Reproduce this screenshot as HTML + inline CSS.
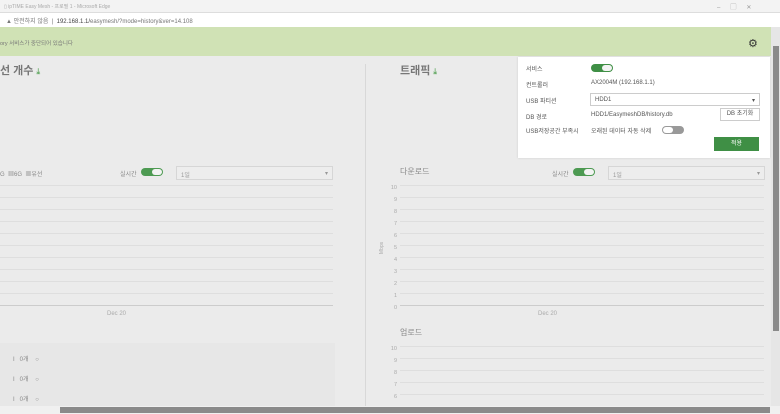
<!DOCTYPE html>
<html><head><meta charset="utf-8"><style>
*{margin:0;padding:0;box-sizing:border-box}
body{width:780px;height:414px;overflow:hidden;background:#ebebeb;font-family:"Liberation Sans","Noto Sans CJK KR",sans-serif;position:relative;color:#888}
.a{position:absolute}
.t{font-size:6px;white-space:nowrap}
.g{position:absolute;height:1px;background:#dedede}
.tog{position:absolute;width:22px;height:8px;border-radius:4px;background:#4d9a52}
.tog:after{content:"";position:absolute;right:1px;top:1px;width:10px;height:6px;border-radius:3px;background:#f3f3f3}
.sel{position:absolute;height:14px;border:1px solid #d6d6d6;background:#ededed;font-size:6px;padding:3px 4px;color:#999}
</style></head><body>
<div class="a" style="left:0;top:0;width:780px;height:12px;background:#f3f3f3"></div>
<div class="a t" style="left:4px;top:3px;color:#aaa;font-size:5px">▯ ipTIME Easy Mesh - 프로필 1 - Microsoft Edge</div>
<div class="a t" style="left:717px;top:2px;color:#999">–&nbsp;&nbsp;&nbsp;&nbsp;&nbsp;&nbsp;▢&nbsp;&nbsp;&nbsp;&nbsp;&nbsp;&nbsp;✕</div>
<div class="a" style="left:0;top:12px;width:780px;height:15px;background:#fff;border-top:1px solid #ddd"></div>
<div class="a t" style="left:6px;top:16px;color:#777">▲ 안전하지 않음 &nbsp;|&nbsp; <span style="color:#444">192.168.1.1/</span>easymesh/?mode=history&amp;ver=14.108</div>
<div class="a" style="left:0;top:27px;width:771px;height:29px;background:#d0e2b5"></div>
<div class="a t" style="left:0;top:39px;color:#777;font-size:5.5px">ory 서비스가 중단되어 있습니다</div>
<div class="a" style="left:748px;top:37px;font-size:11px;color:#333">⚙</div>
<div class="a" style="left:0;top:62px;font-size:11px;color:#777;font-weight:bold">선 개수 <span style="color:#6a6;font-size:8px">⤓</span></div>
<div class="a" style="left:400px;top:62px;font-size:11px;color:#777;font-weight:bold">트래픽 <span style="color:#6a6;font-size:8px">⤓</span></div>
<div class="a" style="left:365px;top:64px;width:1px;height:342px;background:#d8d8d8"></div>
<!-- left chart -->
<div class="a t" style="left:0;top:169px">G &nbsp;▦6G &nbsp;▦유선</div>
<div class="a t" style="left:120px;top:169px">실시간</div>
<div class="tog" style="left:141px;top:168px"></div>
<div class="sel" style="left:176px;top:166px;width:157px">1일<span style="float:right">▾</span></div>
<div class="g" style="left:0;top:185px;width:333px"></div><div class="g" style="left:0;top:197px;width:333px"></div><div class="g" style="left:0;top:209px;width:333px"></div><div class="g" style="left:0;top:221px;width:333px"></div><div class="g" style="left:0;top:233px;width:333px"></div><div class="g" style="left:0;top:245px;width:333px"></div><div class="g" style="left:0;top:257px;width:333px"></div><div class="g" style="left:0;top:269px;width:333px"></div><div class="g" style="left:0;top:281px;width:333px"></div><div class="g" style="left:0;top:293px;width:333px"></div>
<div class="a" style="left:0;top:305px;width:333px;height:1px;background:#ccc"></div>
<div class="a t" style="left:107px;top:311px;color:#aaa">Dec 20</div>
<div class="a" style="left:0;top:343px;width:335px;height:63px;background:#e7e7e7"></div>
<div class="a t" style="left:13px;top:354px">I &nbsp; 0개 &nbsp;&nbsp; ○</div>
<div class="a t" style="left:13px;top:374px">I &nbsp; 0개 &nbsp;&nbsp; ○</div>
<div class="a t" style="left:13px;top:394px">I &nbsp; 0개 &nbsp;&nbsp; ○</div>
<!-- right chart -->
<div class="a" style="left:400px;top:166px;font-size:8px;color:#888">다운로드</div>
<div class="a t" style="left:552px;top:169px">실시간</div>
<div class="tog" style="left:573px;top:168px"></div>
<div class="sel" style="left:608px;top:166px;width:157px">1일<span style="float:right">▾</span></div>
<div class="a t" style="left:390px;top:182px;color:#aaa;line-height:12px;text-align:right;width:7px;font-size:5.5px">10<br>9<br>8<br>7<br>6<br>5<br>4<br>3<br>2<br>1<br>0</div>
<div class="a t" style="left:376px;top:245px;transform:rotate(-90deg);color:#aaa;font-size:5px">Mbps</div>
<div class="g" style="left:400px;top:185px;width:364px"></div><div class="g" style="left:400px;top:197px;width:364px"></div><div class="g" style="left:400px;top:209px;width:364px"></div><div class="g" style="left:400px;top:221px;width:364px"></div><div class="g" style="left:400px;top:233px;width:364px"></div><div class="g" style="left:400px;top:245px;width:364px"></div><div class="g" style="left:400px;top:257px;width:364px"></div><div class="g" style="left:400px;top:269px;width:364px"></div><div class="g" style="left:400px;top:281px;width:364px"></div><div class="g" style="left:400px;top:293px;width:364px"></div>
<div class="a" style="left:400px;top:305px;width:364px;height:1px;background:#ccc"></div>
<div class="a t" style="left:538px;top:311px;color:#aaa">Dec 20</div>
<div class="a" style="left:400px;top:327px;font-size:8px;color:#888">업로드</div>
<div class="a t" style="left:390px;top:343px;color:#aaa;line-height:12px;text-align:right;width:7px;font-size:5.5px">10<br>9<br>8<br>7<br>6</div>
<div class="g" style="left:400px;top:346px;width:364px"></div><div class="g" style="left:400px;top:358px;width:364px"></div><div class="g" style="left:400px;top:370px;width:364px"></div><div class="g" style="left:400px;top:382px;width:364px"></div><div class="g" style="left:400px;top:394px;width:364px"></div>
<!-- settings panel -->
<div class="a" style="left:518px;top:57px;width:252px;height:101px;background:#fff;box-shadow:0 0 2px #ccc"></div>
<div class="a t" style="left:526px;top:64px;color:#555">서비스</div>
<div class="tog" style="left:591px;top:64px;background:#3f8f45"></div>
<div class="a t" style="left:526px;top:80px;color:#555">컨트롤러</div>
<div class="a t" style="left:591px;top:80px;color:#555">AX2004M (192.168.1.1)</div>
<div class="a t" style="left:526px;top:96px;color:#555">USB 파티션</div>
<div class="a" style="left:590px;top:93px;width:170px;height:13px;border:1px solid #ccc;font-size:6px;color:#555;padding:3px 4px">HDD1<span style="float:right">▾</span></div>
<div class="a t" style="left:526px;top:112px;color:#555">DB 경로</div>
<div class="a t" style="left:591px;top:112px;color:#555">HDD1/EasymeshDB/history.db</div>
<div class="a" style="left:720px;top:108px;width:40px;height:13px;border:1px solid #ccc;font-size:6px;color:#555;text-align:center;line-height:11px">DB 초기화</div>
<div class="a t" style="left:526px;top:126px;color:#555">USB저장공간 부족시</div>
<div class="a t" style="left:591px;top:126px;color:#555">오래된 데이터 자동 삭제</div>
<div class="a" style="left:662px;top:126px;width:22px;height:8px;border-radius:4px;background:#999"><div style="position:absolute;left:1px;top:1px;width:10px;height:6px;border-radius:3px;background:#fff"></div></div>
<div class="a" style="left:714px;top:137px;width:45px;height:14px;background:#3f8f45;color:#fff;font-size:6px;text-align:center;line-height:14px">적용</div>
<!-- scrollbars -->
<div class="a" style="left:771px;top:27px;width:9px;height:379px;background:#e6e6e6"></div>
<div class="a" style="left:773px;top:46px;width:6px;height:285px;background:#8a8a8a"></div>
<div class="a" style="left:0;top:406px;width:780px;height:8px;background:#f0f0f0"></div>
<div class="a" style="left:60px;top:407px;width:710px;height:6px;background:#8a8a8a"></div>
</body></html>
